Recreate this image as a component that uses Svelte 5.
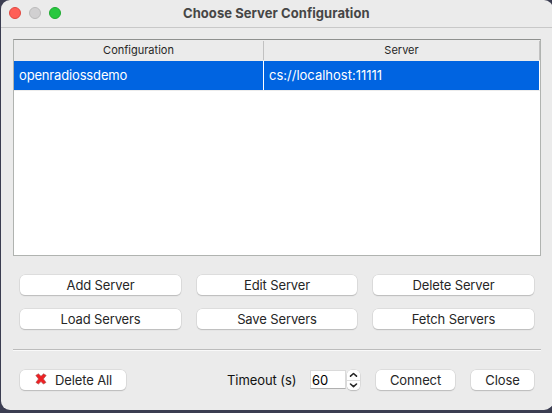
<script>
  const actions = ['Add Server', 'Edit Server', 'Delete Server', 'Load Servers', 'Save Servers', 'Fetch Servers'];
  const rows = [{ name: 'openradiossdemo', server: 'cs://localhost:11111' }];
  let timeout = $state(60);
  const step = (n) => (timeout += n);
</script>

<main class="desktop">
  <section class="window">
    <header class="titlebar">
      <div class="lights"><i class="red"></i><i class="gray"></i><i class="green"></i></div>
      <h1>Choose Server Configuration</h1>
    </header>
    <div class="table">
      <div class="head"><span class="col">Configuration</span><span class="col">Server</span></div>
      {#each rows as row}
        <div class="row"><span class="cell">{row.name}</span><span class="cell">{row.server}</span></div>
      {/each}
    </div>
    <div class="grid">
      {#each actions as label}<button>{label}</button>{/each}
    </div>
    <div class="rule"></div>
    <footer>
      <button class="clear">
        <svg width="12" height="12" viewBox="0 0 12 12">
          <path d="M3.4 .8 6 3.2 8.6 .8 11.2 2.4 8.4 5.9 11 9.4 8.4 11.1 6 8.6 3.4 11.1 .9 9.4 3.5 5.9 .8 2.4Z" fill="#ee2024" stroke="#a45550" stroke-width=".6" stroke-linejoin="round" />
        </svg>
        <span>Delete All</span>
      </button>
      <span class="label">Timeout (s)</span>
      <span class="field">{timeout}</span>
      <div class="stepper">
        <button aria-label="Increase" onclick={() => step(1)}><svg width="13" height="10" viewBox="0 0 13 10"><path d="M3.5 6.2 6.5 3.5 9.5 6.2" /></svg></button>
        <button aria-label="Decrease" onclick={() => step(-1)}><svg width="13" height="10" viewBox="0 0 13 10"><path d="M3.5 3 6.5 5.7 9.5 3" /></svg></button>
      </div>
      <button class="connect">Connect</button>
      <button class="close">Close</button>
    </footer>
  </section>
</main>

<style>
  .desktop { box-sizing: border-box; width: 552px; height: 413px; padding-left: 1px; background: #3b3d51; overflow: hidden; font: 13px/20px Inter, "Liberation Sans", sans-serif; color: #262626; }
  .window { width: 552px; height: 410px; background: #ebebeb; border-radius: 9px; overflow: hidden; }
  .titlebar { box-sizing: border-box; height: 28px; border-bottom: 1px solid #c8c8c8; display: flex; align-items: center; }
  .lights { display: flex; gap: 8px; margin-left: 8px; width: 52px; margin-right: 122px; }
  .lights i { box-sizing: border-box; width: 12px; height: 12px; border-radius: 50%; flex: none; margin-top: -1px; }
  .red { background: #ff5f57; border: 1px solid #df4840; }
  .gray { background: #d1d0d1; border: 1px solid #bababa; }
  .green { background: #28c840; border: 1px solid #1eaa31; }
  h1 { margin: 0; font-size: 13px; line-height: 20px; font-weight: 700; color: #464646; white-space: nowrap; letter-spacing: .06px; position: relative; top: -1px; }
  .table { box-sizing: border-box; width: 528px; height: 217px; margin: 11px 0 0 12px; border: 1px solid #b0b3b0; border-top-color: #8e908e; background: #fff; }
  .head { display: flex; height: 21px; background: #ebebeb; font-size: 11px; line-height: 21px; text-align: center; }
  .col { box-sizing: border-box; width: 250px; border-right: 1px solid; border-image: linear-gradient(transparent 2px, #c1c1c1 2px, #c1c1c1 19px, transparent 19px) 1; }
  .col + .col { width: 276px; }
  .row { display: flex; height: 29px; border-bottom: 1px solid #ececec; line-height: 29px; color: #fff; }
  .cell { box-sizing: border-box; width: 249px; margin-right: 1px; padding-left: 5px; background: #0064e1; letter-spacing: -.16px; }
  .cell + .cell { width: 275px; letter-spacing: 0; }
  .grid { display: grid; grid-template-columns: 161px 160px 161px; gap: 14px 16px; margin: 19px 0 0 19px; }
  button { box-sizing: border-box; height: 20px; border: 0; padding: 0; border-radius: 5px; background: #fff; color: inherit; font: inherit; letter-spacing: -.12px; box-shadow: 0 0 0 .5px #d0d0d0, 0 1px 1px #aaa; white-space: nowrap; }
  .rule { height: 1px; width: 528px; margin: 20px 0 0 12px; background: #bcbcbc; box-shadow: 0 1px #f9f9f9; }
  footer { display: flex; margin: 20px 0 0 19px; height: 20px; }
  .clear { width: 106px; display: flex; align-items: center; padding-left: 15px; gap: 8px; }
  .clear svg { position: relative; top: -1px; }
  .label { width: 83px; margin-left: 101px; white-space: nowrap; color: #111; letter-spacing: -.08px; }
  .field { box-sizing: border-box; width: 36px; height: 19px; padding-left: 1px; line-height: 19px; background: #fff; border: 1px solid #dadada; border-bottom-color: #b0b0b0; color: #000; font-size: 13px; }
  .stepper { width: 13px; height: 20px; margin-left: 1px; border-radius: 5px; overflow: hidden; background: #fff; box-shadow: 0 0 0 .5px #d0d0d0, 0 1px 1px #aaa; display: flex; flex-direction: column; }
  .stepper button { width: 13px; height: 10px; border-radius: 0; box-shadow: none; display: flex; }
  .stepper button + button { border-top: 1px solid #ddd; }
  .stepper path { fill: none; stroke: #262626; stroke-width: 1.6; stroke-linecap: round; stroke-linejoin: round; }
  .connect { width: 79px; margin-left: 16px; }
  .close { width: 63px; margin-left: 16px; }
</style>
